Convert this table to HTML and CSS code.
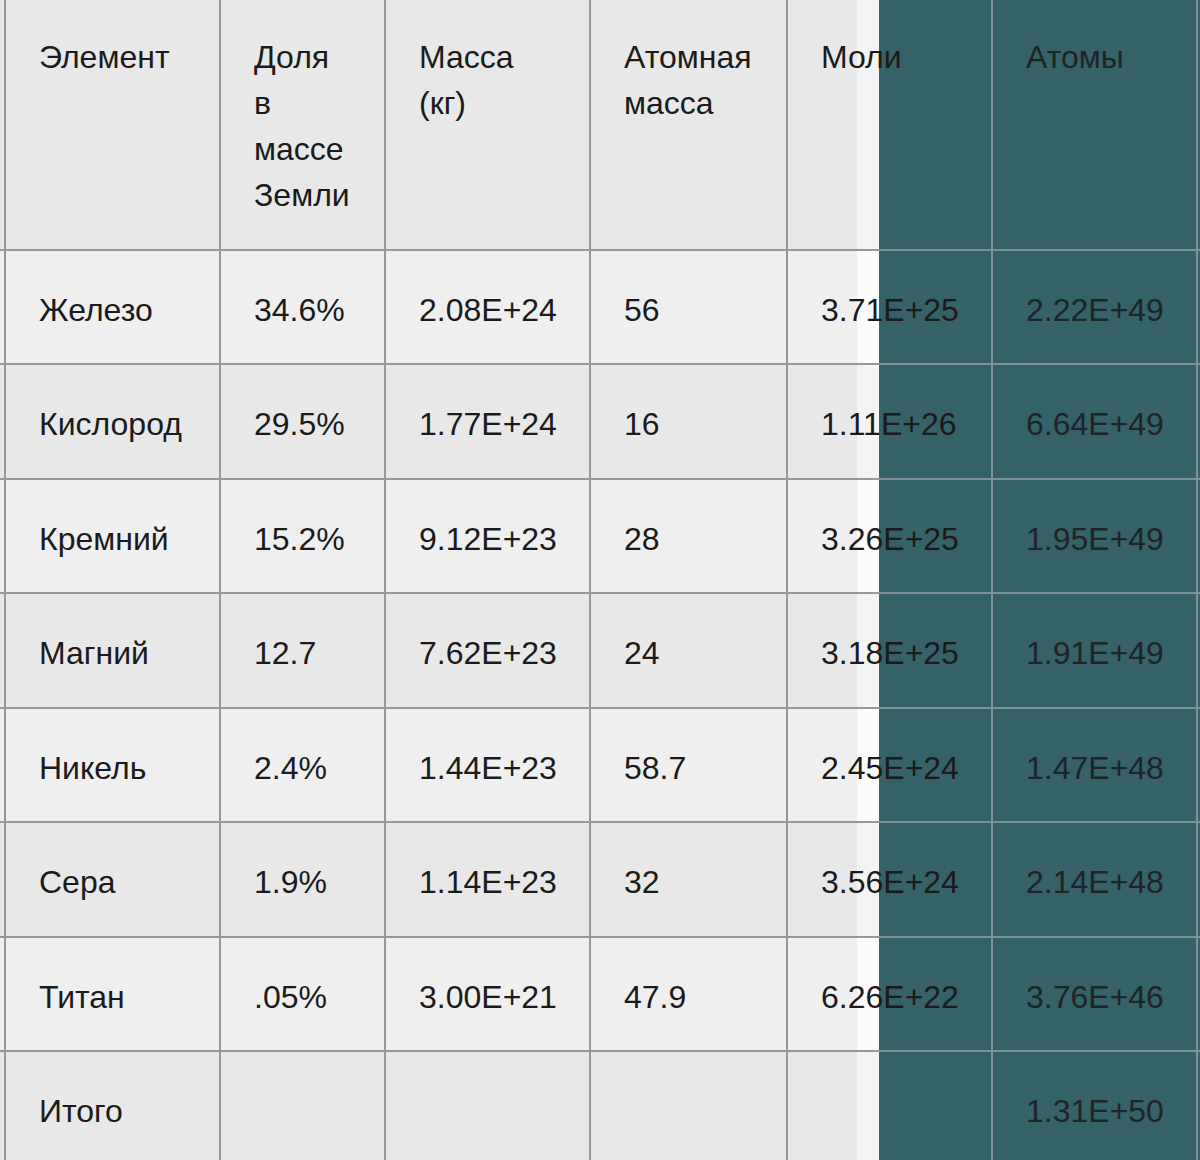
FILE: index.html
```html
<!DOCTYPE html>
<html lang="ru">
<head>
<meta charset="utf-8">
<title>Элементы Земли</title>
<link rel="stylesheet" href="styles.css">
</head>
<body>
<table class="tbl">
  <colgroup>
    <col class="w-cut"><col class="w-1"><col class="w-2"><col class="w-3"><col class="w-4"><col class="w-5"><col class="w-6"><col class="w-tail">
  </colgroup>
  <thead>
    <tr class="head">
      <th class="cut"></th>
      <th>Элемент</th>
      <th>Доля<br>в<br>массе<br>Земли</th>
      <th>Масса<br>(кг)</th>
      <th>Атомная<br>масса</th>
      <th class="mol">Моли</th>
      <th class="atoms">Атомы</th>
      <th class="tail"></th>
    </tr>
  </thead>
  <tbody>
    <tr class="lt"><td class="cut"></td><td>Железо</td><td>34.6%</td><td>2.08E+24</td><td>56</td><td class="mol">3.71E+25</td><td class="atoms">2.22E+49</td><td class="tail"></td></tr>
    <tr class="dk"><td class="cut"></td><td>Кислород</td><td>29.5%</td><td>1.77E+24</td><td>16</td><td class="mol">1.11E+26</td><td class="atoms">6.64E+49</td><td class="tail"></td></tr>
    <tr class="lt"><td class="cut"></td><td>Кремний</td><td>15.2%</td><td>9.12E+23</td><td>28</td><td class="mol">3.26E+25</td><td class="atoms">1.95E+49</td><td class="tail"></td></tr>
    <tr class="dk"><td class="cut"></td><td>Магний</td><td>12.7</td><td>7.62E+23</td><td>24</td><td class="mol">3.18E+25</td><td class="atoms">1.91E+49</td><td class="tail"></td></tr>
    <tr class="lt"><td class="cut"></td><td>Никель</td><td>2.4%</td><td>1.44E+23</td><td>58.7</td><td class="mol">2.45E+24</td><td class="atoms">1.47E+48</td><td class="tail"></td></tr>
    <tr class="dk"><td class="cut"></td><td>Сера</td><td>1.9%</td><td>1.14E+23</td><td>32</td><td class="mol">3.56E+24</td><td class="atoms">2.14E+48</td><td class="tail"></td></tr>
    <tr class="lt"><td class="cut"></td><td>Титан</td><td>.05%</td><td>3.00E+21</td><td>47.9</td><td class="mol">6.26E+22</td><td class="atoms">3.76E+46</td><td class="tail"></td></tr>
    <tr class="dk"><td class="cut"></td><td>Итого</td><td></td><td></td><td></td><td class="mol"></td><td class="atoms">1.31E+50</td><td class="tail"></td></tr>
  </tbody>
</table>
</body>
</html>
```
FILE: styles.css
```css
html, body {
  margin: 0;
  padding: 0;
  overflow: hidden;
  background: #ececec;
}

.tbl {
  --line: #989898;
  --line-dark: #7c9498;
  --teal: #356169;
  --bg-dk: #e8e8e8;
  --bg-lt: #efefef;
  --strip-dk: #f4f4f4;
  --strip-lt: #fcfcfc;
  border-collapse: separate;
  border-spacing: 0;
  table-layout: fixed;
  width: 1220px;
  font-family: "Liberation Sans", Arial, sans-serif;
  font-size: 32px;
  line-height: 46px;
  color: #1b1b1b;
}

.w-cut { width: 6px; }
.w-1 { width: 215px; }
.w-2 { width: 165px; }
.w-3 { width: 205px; }
.w-4 { width: 197px; }
.w-5 { width: 205px; }
.w-6 { width: 205px; }
.w-tail { width: 22px; }

.tbl th,
.tbl td {
  box-sizing: border-box;
  text-align: left;
  font-weight: normal;
  border-right: 2px solid var(--line);
  border-bottom: 2px solid var(--line);
  white-space: nowrap;
  overflow: visible;
}

.tbl th {
  vertical-align: top;
  padding: 34px 10px 31px 33px;
  background-color: var(--bg-dk);
}

.tbl td {
  vertical-align: middle;
  padding: 36px 10px 30.45px 33px;
}

.dk td { background-color: var(--bg-dk); }
.lt td { background-color: var(--bg-lt); }

.tbl .cut {
  padding: 0;
}

.tbl .mol {
  --row: var(--bg-lt);
  --strip: var(--strip-lt);
  border-right-color: var(--line-dark);
  border-bottom-color: transparent;
  background-origin: border-box;
  background-image:
    linear-gradient(to right, var(--line) 91px, var(--line-dark) 91px),
    linear-gradient(to right, var(--row) 69px, var(--strip) 69px 91px, var(--teal) 91px);
  background-size: 100% 2px, 100% 100%;
  background-position: left bottom, left top;
  background-repeat: no-repeat;
}

.tbl .head .mol,
.tbl .dk .mol {
  --row: var(--bg-dk);
  --strip: var(--strip-dk);
}

.tbl .atoms,
.tbl .tail {
  background: var(--teal);
  border-right-color: var(--line-dark);
  border-bottom-color: var(--line-dark);
  color: #1f2526;
}

.tbl .tail {
  padding: 0;
}
```
